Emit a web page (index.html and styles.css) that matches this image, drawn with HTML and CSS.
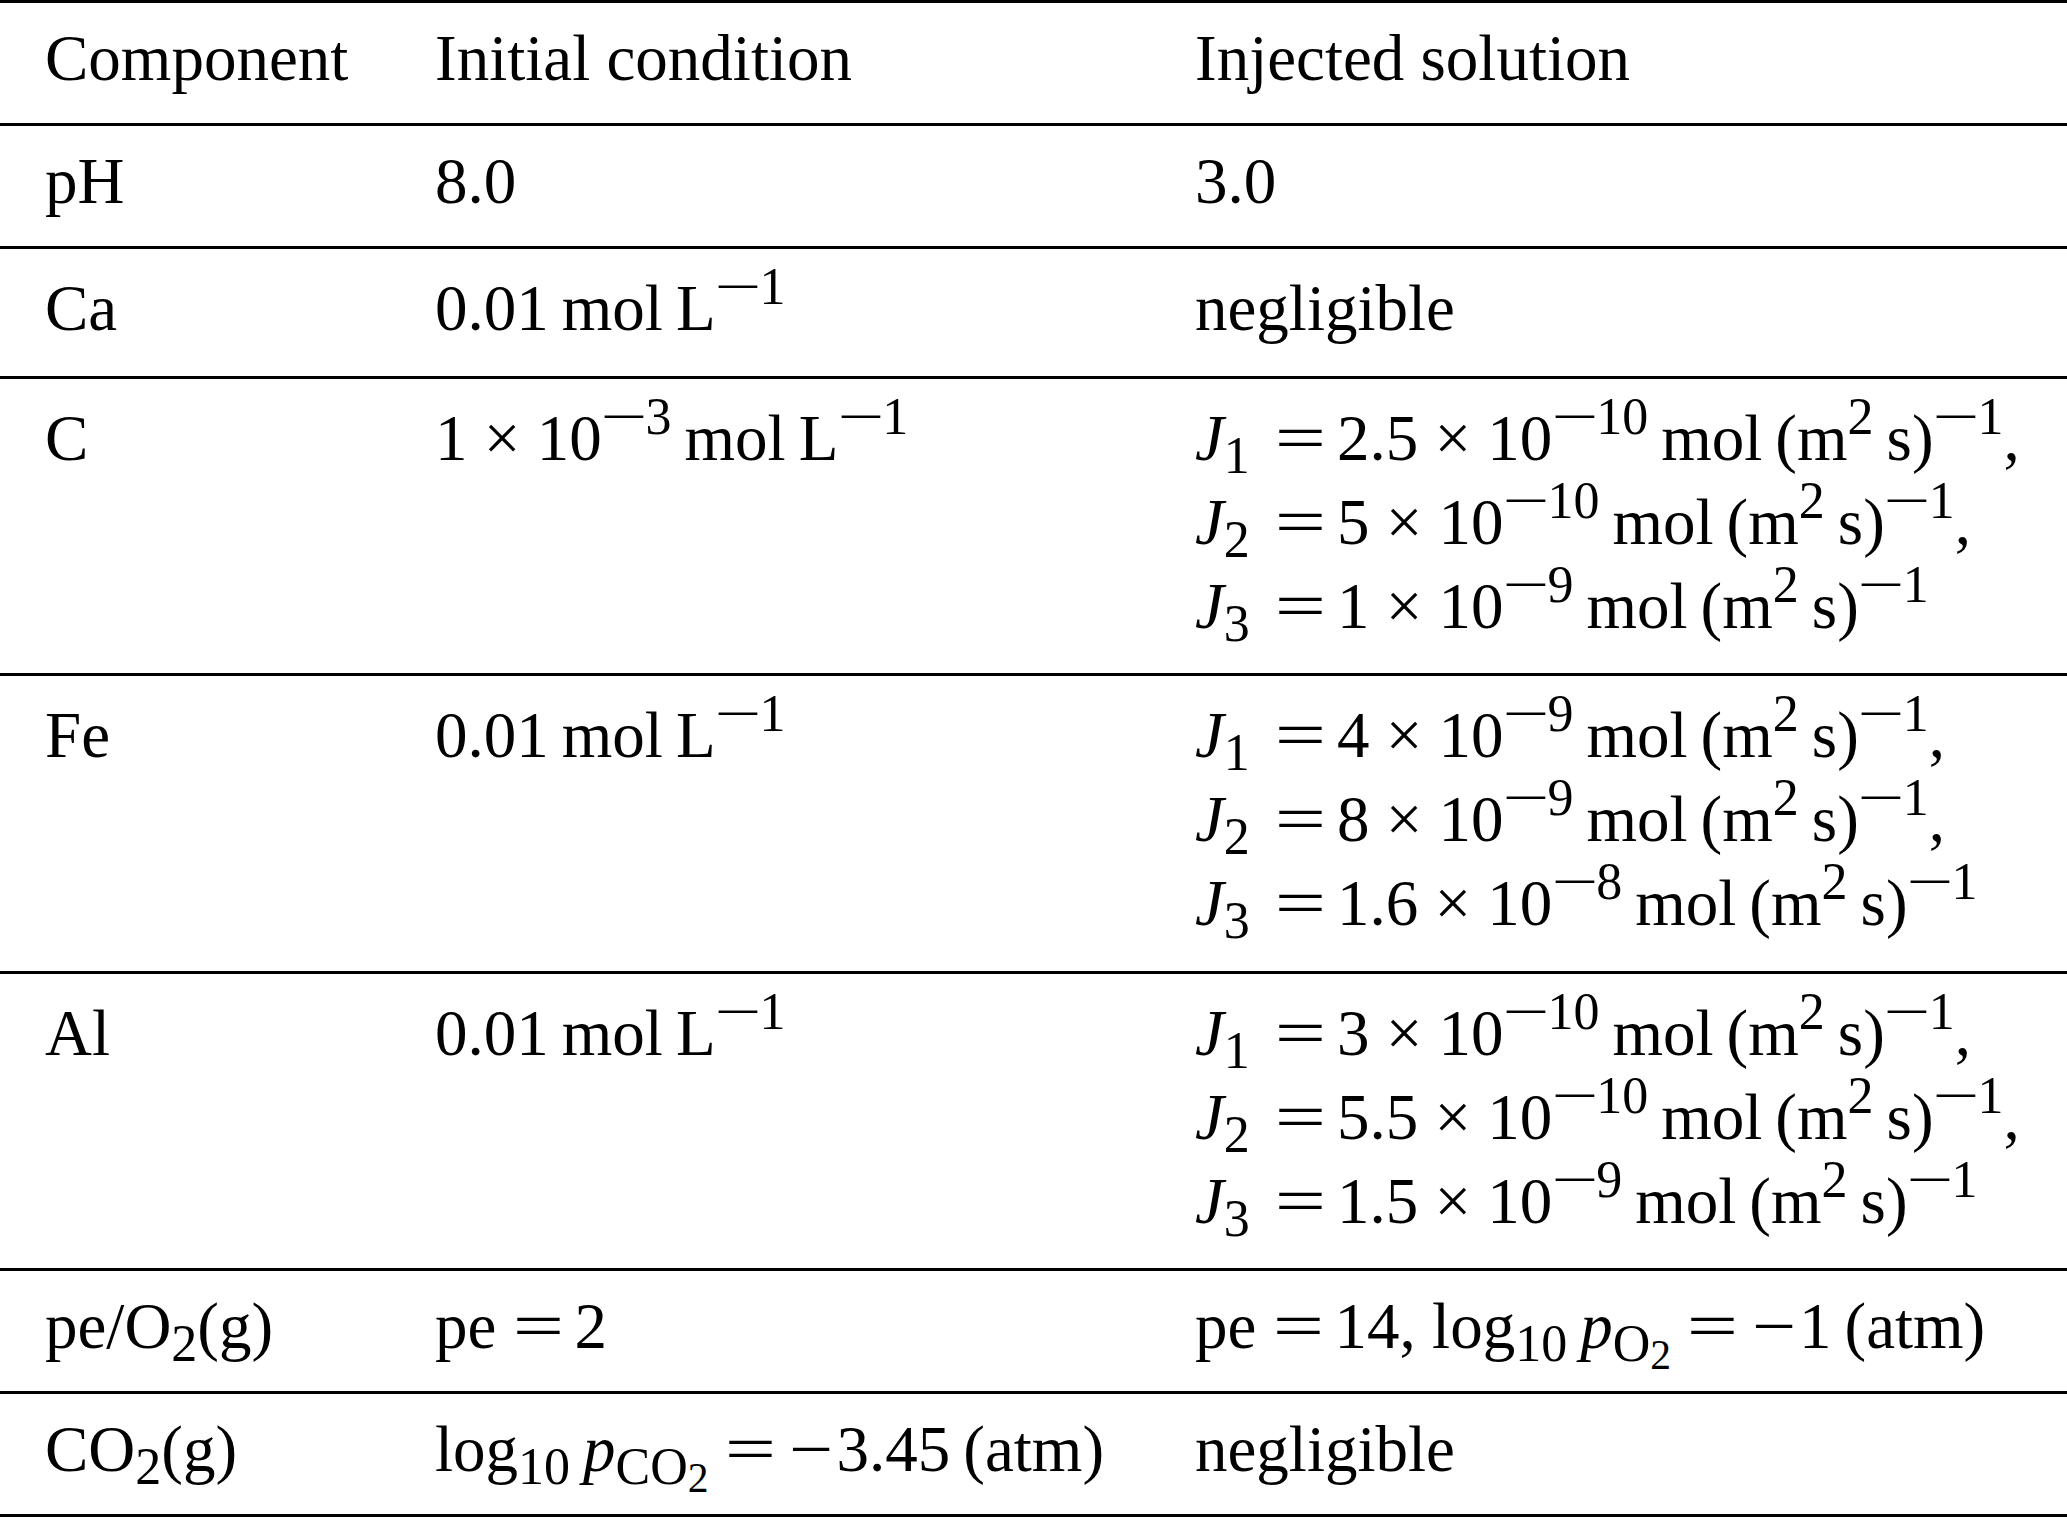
FILE: index.html
```html
<!DOCTYPE html>
<html lang="en">
<head>
<meta charset="utf-8">
<title>Components table</title>
<link rel="stylesheet" href="styles.css">
</head>
<body>
<table class="data">
  <colgroup><col class="c1"><col class="c2"><col class="c3"></colgroup>
  <thead>
    <tr><th>Component</th><th>Initial condition</th><th>Injected solution</th></tr>
  </thead>
  <tbody>
    <tr><td>pH</td><td>8.0</td><td>3.0</td></tr>
    <tr class="sup-row"><td>Ca</td><td>0.01&thinsp;mol&thinsp;L<sup><span class="mn">−</span>1</sup></td><td>negligible</td></tr>
    <tr class="sup-row">
      <td>C</td>
      <td>1<span class="bin">×</span>10<sup><span class="mn">−</span>3</sup>&thinsp;mol&thinsp;L<sup><span class="mn">−</span>1</sup></td>
      <td><span class="vj">J</span><sub>1</sub><span class="rel">=</span>2.5<span class="bin">×</span>10<sup><span class="mn">−</span>10</sup>&thinsp;mol&thinsp;(m<sup>2</sup>&thinsp;s)<sup><span class="mn">−</span>1</sup>,<br><span class="vj">J</span><sub>2</sub><span class="rel">=</span>5<span class="bin">×</span>10<sup><span class="mn">−</span>10</sup>&thinsp;mol&thinsp;(m<sup>2</sup>&thinsp;s)<sup><span class="mn">−</span>1</sup>,<br><span class="vj">J</span><sub>3</sub><span class="rel">=</span>1<span class="bin">×</span>10<sup><span class="mn">−</span>9</sup>&thinsp;mol&thinsp;(m<sup>2</sup>&thinsp;s)<sup><span class="mn">−</span>1</sup></td>
    </tr>
    <tr class="sup-row">
      <td>Fe</td>
      <td>0.01&thinsp;mol&thinsp;L<sup><span class="mn">−</span>1</sup></td>
      <td><span class="vj">J</span><sub>1</sub><span class="rel">=</span>4<span class="bin">×</span>10<sup><span class="mn">−</span>9</sup>&thinsp;mol&thinsp;(m<sup>2</sup>&thinsp;s)<sup><span class="mn">−</span>1</sup>,<br><span class="vj">J</span><sub>2</sub><span class="rel">=</span>8<span class="bin">×</span>10<sup><span class="mn">−</span>9</sup>&thinsp;mol&thinsp;(m<sup>2</sup>&thinsp;s)<sup><span class="mn">−</span>1</sup>,<br><span class="vj">J</span><sub>3</sub><span class="rel">=</span>1.6<span class="bin">×</span>10<sup><span class="mn">−</span>8</sup>&thinsp;mol&thinsp;(m<sup>2</sup>&thinsp;s)<sup><span class="mn">−</span>1</sup></td>
    </tr>
    <tr class="sup-row">
      <td>Al</td>
      <td>0.01&thinsp;mol&thinsp;L<sup><span class="mn">−</span>1</sup></td>
      <td><span class="vj">J</span><sub>1</sub><span class="rel">=</span>3<span class="bin">×</span>10<sup><span class="mn">−</span>10</sup>&thinsp;mol&thinsp;(m<sup>2</sup>&thinsp;s)<sup><span class="mn">−</span>1</sup>,<br><span class="vj">J</span><sub>2</sub><span class="rel">=</span>5.5<span class="bin">×</span>10<sup><span class="mn">−</span>10</sup>&thinsp;mol&thinsp;(m<sup>2</sup>&thinsp;s)<sup><span class="mn">−</span>1</sup>,<br><span class="vj">J</span><sub>3</sub><span class="rel">=</span>1.5<span class="bin">×</span>10<sup><span class="mn">−</span>9</sup>&thinsp;mol&thinsp;(m<sup>2</sup>&thinsp;s)<sup><span class="mn">−</span>1</sup></td>
    </tr>
    <tr>
      <td>pe/O<sub>2</sub>(g)</td>
      <td>pe<span class="rel">=</span>2</td>
      <td>pe<span class="rel">=</span>14, log<sub>10</sub>&thinsp;<span class="v">p</span><sub>O<sub>2</sub></sub><span class="rel">=</span><span class="mn-main">−</span>1&thinsp;(atm)</td>
    </tr>
    <tr>
      <td>CO<sub>2</sub>(g)</td>
      <td>log<sub>10</sub>&thinsp;<span class="v">p</span><sub>CO<sub>2</sub></sub><span class="rel">=</span><span class="mn-main">−</span>3.45&thinsp;(atm)</td>
      <td>negligible</td>
    </tr>
  </tbody>
</table>
</body>
</html>
```

FILE: styles.css
```css
html, body {
  margin: 0;
  padding: 0;
  background: #ffffff;
}

.data {
  width: 2067px;
  table-layout: fixed;
  border-collapse: separate;
  border-spacing: 0;
  font-family: "Liberation Serif", "Times New Roman", serif;
  font-size: 65px;
  line-height: 84px;
  color: #000;
}

.c1 { width: 390px; }
.c2 { width: 760px; }
.c3 { width: 917px; }

.data th,
.data td {
  text-align: left;
  font-weight: normal;
  vertical-align: top;
  white-space: nowrap;
  padding: 12.5px 45px 23.5px 45px;
  border-bottom: 3px solid #000;
}

.data thead th {
  border-top: 3px solid #000;
}

.data .sup-row td {
  padding-top: 17px;
  padding-bottom: 25.5px;
}

.data sup {
  font-size: 0.8em;
  line-height: 0;
  vertical-align: 26px;
}

.data sub {
  font-size: 0.8em;
  line-height: 0;
  vertical-align: -13px;
}

.data sub sub {
  font-size: 0.8em;
  vertical-align: -8px;
}

.v,
.vj {
  font-style: italic;
}

.data .vj + sub {
  margin-right: 0.17em;
}

.rel {
  display: inline-block;
  transform: scaleX(1.4);
  margin: 0 0.28em 0 0.36em;
}

.bin {
  display: inline-block;
  margin: 0 0.25em;
}

.mn {
  display: inline-block;
  transform: scaleX(1.6);
  margin: 0 0.14em;
}

.mn-main {
  display: inline-block;
  transform: scaleX(1.2);
  margin: 0 0.1em;
}
```
